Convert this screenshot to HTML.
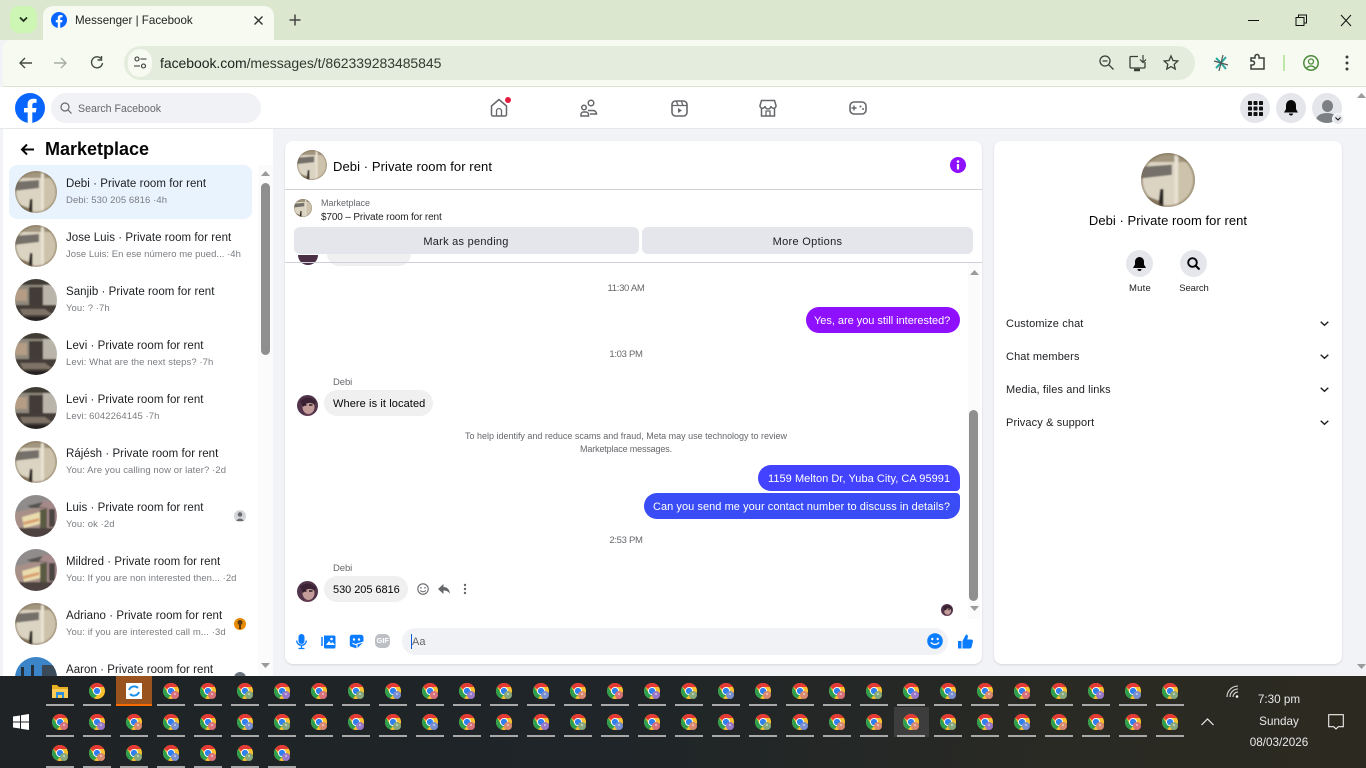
<!DOCTYPE html>
<html lang="en">
<head>
<meta charset="utf-8">
<title>Messenger | Facebook</title>
<style>
*{box-sizing:border-box;margin:0;padding:0}
html,body{width:1366px;height:768px;overflow:hidden;background:#f2f3f7;font-family:"Liberation Sans",sans-serif;color:#1c1e21}
.a{position:absolute}
.t{position:absolute;white-space:nowrap;line-height:16px;font-size:11px;margin-top:1px}
.z{margin-top:0}
.c{transform:translateX(-50%)}
.n{font-size:11.5px;color:#1c1e21;letter-spacing:.05px}
.s{font-size:9.5px;color:#7a7d82;letter-spacing:.08px}
.m{font-size:11px;letter-spacing:.05px}
.k{font-size:9.5px;color:#65676b;letter-spacing:-.3px}
svg{position:absolute;overflow:visible}
.w{background:#fff}
</style>
</head>
<body>
<svg width="0" height="0" style="position:absolute">
<defs>
<clipPath id="cp"><circle cx="21" cy="21" r="21"/></clipPath>
<filter id="bl" x="-10%" y="-10%" width="120%" height="120%"><feGaussianBlur stdDeviation=".7"/></filter>
<symbol id="r1" viewBox="0 0 42 42"><g clip-path="url(#cp)"><g filter="url(#bl)"><rect x="-2" y="-2" width="46" height="46" fill="#cbbfa8"/><rect x="-2" y="-2" width="46" height="9" fill="#a3967f"/><path d="M-2 7H26V44H-2z" fill="#dcd4c2"/><path d="M-2 11L24 9V17L-2 20z" fill="#74716a"/><path d="M26 0H29V44H26z" fill="#e8e1d2"/><path d="M29 7H44V44H29z" fill="#cdc2ab"/><path d="M13 44L15 28H17.500L17.500 44z" fill="#2c2620"/><path d="M-2 31L14 37V44H-2z" fill="#8a7a62"/><path d="M3 35L13 41V44H3z" fill="#2a231c"/><circle cx="21" cy="21" r="21" fill="none" stroke="#7b6a50" stroke-width="3" opacity=".5"/></g></g></symbol>
<symbol id="r2" viewBox="0 0 42 42"><g clip-path="url(#cp)"><g filter="url(#bl)"><rect x="-2" y="-2" width="46" height="46" fill="#8f897d"/><rect x="-2" y="-2" width="46" height="8" fill="#3f3a36"/><rect x="0" y="10" width="12" height="12" fill="#b49c85"/><rect x="14" y="8" width="14" height="18" fill="#423b37"/><rect x="28" y="6" width="16" height="24" fill="#bab5aa"/><path d="M-2 26H44V44H-2z" fill="#443d38"/><path d="M5 30H30L38 36H8z" fill="#7e7266"/><path d="M-2 38H44V44H-2z" fill="#262220"/></g></g></symbol>
<symbol id="r3" viewBox="0 0 42 42"><g clip-path="url(#cp)"><g filter="url(#bl)"><rect x="-2" y="-2" width="46" height="46" fill="#8f8c8b"/><path d="M-2 18L26 11V44H-2z" fill="#a89089"/><path d="M26 6H44V44H26z" fill="#a68a8a"/><path d="M7 22L25 17V29L9 33z" fill="#e9dcae"/><path d="M8 27L24 23V26L9 30z" fill="#d8a06f"/><path d="M25 15L32 13V34H25z" fill="#5a5a42"/><path d="M34 14H40V32H34z" fill="#4a4440"/><path d="M12 11L28 7L24 12L34 13H16z" fill="#55524f"/><path d="M-2 33H44V44H-2z" fill="#4d4240"/></g></g></symbol>
<symbol id="r4" viewBox="0 0 42 42"><g clip-path="url(#cp)"><rect width="42" height="42" fill="#3b84c8"/><rect x="6" y="10" width="3" height="32" fill="#24303a"/><rect x="16" y="8" width="3" height="34" fill="#24303a"/><rect x="27" y="8" width="15" height="34" fill="#3a4a58"/></g></symbol>
<symbol id="pp" viewBox="0 0 42 42"><g clip-path="url(#cp)"><g filter="url(#bl)"><rect x="-2" y="-2" width="46" height="46" fill="#53344c"/><ellipse cx="23" cy="24" rx="12" ry="14" fill="#c39b98"/><path d="M6 12Q20-2 38 12L36 20Q22 10 12 24z" fill="#3a2434"/><path d="M12 20h7M24 20h7" stroke="#2a1a22" stroke-width="3"/><path d="M6 44Q20 32 36 44z" fill="#6a3f57"/></g></g></symbol>
<symbol id="c" viewBox="0 0 16 16"><circle cx="8" cy="8" r="8" fill="#fbc02d"/><path d="M1.200 3.800A8 8 0 0 1 15 4H8L4.600 6.500z" fill="#e53935"/><path d="M1.200 3.800L4.600 10L8 12L5 15.400A8 8 0 0 1 1.200 3.800z" fill="#2e9e4f"/><circle cx="8" cy="8" r="4" fill="#fff"/><circle cx="8" cy="8" r="3.100" fill="#2f7fee"/><circle cx="12" cy="12" r="4" fill="currentColor"/><circle cx="12" cy="11" r="1.100" fill="#fff" opacity=".45"/></symbol>
<symbol id="c0" viewBox="0 0 16 16"><circle cx="8" cy="8" r="8" fill="#fbc02d"/><path d="M1.200 3.800A8 8 0 0 1 15 4H8L4.600 6.500z" fill="#e53935"/><path d="M1.200 3.800L4.600 10L8 12L5 15.400A8 8 0 0 1 1.200 3.800z" fill="#2e9e4f"/><circle cx="8" cy="8" r="4" fill="#fff"/><circle cx="8" cy="8" r="3.100" fill="#2f7fee"/></symbol>
</defs>
</svg>

<!-- Browser chrome -->
<div class="a" style="left:0;top:0;width:1366px;height:40px;background:#dbe8cf"></div>
<div class="a" style="left:10px;top:6px;width:27px;height:27px;border-radius:9px;background:#cdf5b4"></div>
<svg style="left:10px;top:6px" width="27" height="27"><path d="M10 11.500l3.500 3.500 3.500-3.500" fill="none" stroke="#20301c" stroke-width="1.800"/></svg>
<div class="a" style="left:43px;top:6px;width:231px;height:36px;background:#f6faf0;border-radius:10px 10px 0 0"></div>
<svg style="left:51px;top:12px" width="16" height="16" viewBox="0 0 30 30"><circle cx="15" cy="15" r="15" fill="#0866ff"/><path d="M20.800 19.400l.7-4.400h-4.200v-2.800c0-1.300.6-2.400 2.400-2.400h1.900V6s-1.700-.3-3.400-.3c-3.400 0-5.600 2-5.600 5.700V15H9v4.400h3.700V30h4.600V19.400z" fill="#fff"/></svg>
<div class="t" style="left:75px;top:12px;font-size:11.600px;color:#20241e">Messenger | Facebook</div>
<svg style="left:253px;top:15px" width="11" height="11"><path d="M1.500 1.500l8 8M9.500 1.500l-8 8" stroke="#333" stroke-width="1.400"/></svg>
<svg style="left:289px;top:14px" width="12" height="12"><path d="M6 .5v11M.5 6h11" stroke="#444" stroke-width="1.500"/></svg>
<svg style="left:1248px;top:14px" width="110" height="14"><path d="M0 6.500h11" stroke="#111" stroke-width="1"/><path d="M48 3.500h8v8h-8zM50.500 3.500V1h8v8h-2.500" fill="none" stroke="#111"/><path d="M93 1l10 11M103 1L93 12" stroke="#111"/></svg>

<div class="a" style="left:3px;top:40px;width:1363px;height:47px;background:#f6faf0;border-bottom:1px solid #dbe6d2;border-radius:8px 0 0 0"></div>
<svg style="left:18px;top:55px" width="96" height="16"><path d="M14 8H2M7 3L2 8 7 13" fill="none" stroke="#444b40" stroke-width="1.400"/><path d="M36 8h12M43 3l5 5-5 5" fill="none" stroke="#a8aea4" stroke-width="1.400"/><path d="M83 3.500a5.500 5.500 0 1 0 1.500 4.500M83.500 1v4h-4" fill="none" stroke="#444b40" stroke-width="1.400"/></svg>
<div class="a" style="left:124px;top:46px;width:1071px;height:34px;border-radius:17px;background:#e4ecdd"></div>
<div class="a" style="left:128px;top:49px;width:24px;height:28px;border-radius:14px;background:#f6faf0"></div>
<svg style="left:134px;top:56px" width="13" height="14"><circle cx="3" cy="3" r="2" fill="none" stroke="#333" stroke-width="1.100"/><path d="M6.500 3h6M0 10h6" stroke="#333" stroke-width="1.100"/><circle cx="9.500" cy="10" r="2" fill="none" stroke="#333" stroke-width="1.100"/></svg>
<div class="t z" style="left:160px;top:55px;font-size:14px;color:#333a30;letter-spacing:-.05px"><span style="color:#20241e">facebook.com</span>/messages/t/862339283485845</div>
<svg style="left:1098px;top:54px" width="84" height="18"><circle cx="7" cy="7" r="5" fill="none" stroke="#3a3f37" stroke-width="1.300"/><path d="M4.500 7h5M11 11l4.500 4.500" stroke="#3a3f37" stroke-width="1.300"/><path d="M40 2.500h-7a1 1 0 0 0-1 1V13a1 1 0 0 0 1 1h13a1 1 0 0 0 1-1V8" fill="none" stroke="#3a3f37" stroke-width="1.300"/><path d="M36 16h6" stroke="#3a3f37" stroke-width="2.500"/><path d="M45 1v7M42 5.500l3 3 3-3" fill="none" stroke="#3a3f37" stroke-width="1.200"/><path d="M73 2l2 4.500 4.800.5-3.600 3.300 1 4.800L73 12.600l-4.200 2.500 1-4.800L66.200 7l4.800-.5z" fill="none" stroke="#3a3f37" stroke-width="1.300"/></svg>
<svg style="left:1213px;top:54px" width="16" height="18"><path d="M3 4l5 5-5 5M13 3L8 9l5 6" fill="none" stroke="#2aa8a0" stroke-width="2"/><path d="M1 7l14 4M10 1L6 17" stroke="#555" stroke-width="1.200"/></svg>
<svg style="left:1249px;top:53px" width="18" height="18"><path d="M2 4h4V2.500a2 2 0 0 1 4 0V4h5v11H2v-4h1.500a2 2 0 0 0 0-4H2z" fill="none" stroke="#3a3f37" stroke-width="1.500" transform="translate(0 1)"/></svg>
<div class="a" style="left:1283px;top:55px;width:2px;height:16px;background:#bfe6a9"></div>
<svg style="left:1303px;top:55px" width="16" height="16"><circle cx="8" cy="8" r="7.200" fill="none" stroke="#4c8a3c" stroke-width="1.500"/><circle cx="8" cy="6.500" r="2.500" fill="none" stroke="#4c8a3c" stroke-width="1.300"/><path d="M3.500 13q4.500-4 9 0" fill="none" stroke="#4c8a3c" stroke-width="1.300"/></svg>
<svg style="left:1345px;top:55px" width="4" height="16"><circle cx="2" cy="2" r="1.500" fill="#3a3f37"/><circle cx="2" cy="8" r="1.500" fill="#3a3f37"/><circle cx="2" cy="14" r="1.500" fill="#3a3f37"/></svg>

<!-- Facebook top nav -->
<div class="a w" style="left:0;top:87px;width:1366px;height:42px;border-bottom:1px solid #e6e7ea"></div>
<svg style="left:15px;top:93px" width="30" height="30" viewBox="0 0 30 30"><circle cx="15" cy="15" r="15" fill="#0866ff"/><path d="M20.800 19.400l.7-4.400h-4.200v-2.800c0-1.300.6-2.400 2.400-2.400h1.900V6s-1.700-.3-3.400-.3c-3.400 0-5.600 2-5.600 5.700V15H9v4.400h3.700V30h4.600V19.400z" fill="#fff"/></svg>
<div class="a" style="left:51px;top:93px;width:210px;height:30px;border-radius:15px;background:#f0f2f5"></div>
<svg style="left:60px;top:102px" width="12" height="12"><circle cx="5" cy="5" r="4" fill="none" stroke="#65676b" stroke-width="1.200"/><path d="M8 8l3.500 3.500" stroke="#65676b" stroke-width="1.200"/></svg>
<div class="t" style="left:78px;top:100px;font-size:10.600px;color:#65676b">Search Facebook</div>

<svg style="left:490px;top:97px" width="24" height="21"><path d="M1.500 9L9 2.500 16.500 9v8.500a1.500 1.500 0 0 1-1.500 1.500H3a1.500 1.500 0 0 1-1.500-1.500z" fill="none" stroke="#65676b" stroke-width="1.500"/><path d="M6.500 19v-5a2.500 2.500 0 0 1 5 0v5" fill="none" stroke="#65676b" stroke-width="1.300"/><circle cx="18" cy="3" r="3" fill="#e41e3f"/></svg>
<svg style="left:580px;top:99px" width="18" height="18"><circle cx="11" cy="4" r="2.800" fill="none" stroke="#65676b" stroke-width="1.500"/><circle cx="4" cy="8.500" r="2.300" fill="none" stroke="#65676b" stroke-width="1.500"/><path d="M8 11.500h5a3.500 3.500 0 0 1 3.500 3.500H10" fill="none" stroke="#65676b" stroke-width="1.500"/><path d="M1 17v-1.500a2.500 2.500 0 0 1 2.500-2.500H6a2.500 2.500 0 0 1 2.500 2.500V17z" fill="none" stroke="#65676b" stroke-width="1.500"/></svg>
<svg style="left:671px;top:100px" width="17" height="17"><rect x="1" y="1" width="15" height="15" rx="3.500" fill="none" stroke="#65676b" stroke-width="1.600"/><path d="M1 5.500h15M5.500 1.500l1.500 4M10.500 1.500l1.500 4" stroke="#65676b" stroke-width="1.300"/><path d="M7 8v5l4-2.500z" fill="#65676b"/></svg>
<svg style="left:759px;top:99px" width="18" height="18"><path d="M2.500 1.500h13l1.500 5a2.500 2.500 0 0 1-5 .5 2.800 2.800 0 0 1-6 0 2.500 2.500 0 0 1-5-.5z" fill="none" stroke="#65676b" stroke-width="1.500"/><path d="M2.500 9v8h13V9" fill="none" stroke="#65676b" stroke-width="1.500"/><path d="M7 17v-5h4v5" fill="none" stroke="#65676b" stroke-width="1.300"/></svg>
<svg style="left:849px;top:101px" width="18" height="14"><rect x="1" y="1" width="16" height="12" rx="4" fill="none" stroke="#65676b" stroke-width="1.600"/><path d="M5 4.500v5M2.500 7h5" stroke="#65676b" stroke-width="1.400"/><circle cx="11.500" cy="5.500" r="1" fill="#65676b"/><circle cx="14" cy="8" r="1" fill="#65676b"/></svg>

<div class="a" style="left:1240px;top:93px;width:30px;height:30px;border-radius:50%;background:#e4e6eb"></div>
<svg style="left:1248px;top:101px" width="15" height="15"><g fill="#111"><rect width="4" height="4" rx=".8"/><rect x="5.500" width="4" height="4" rx=".8"/><rect x="11" width="4" height="4" rx=".8"/><rect y="5.500" width="4" height="4" rx=".8"/><rect x="5.500" y="5.500" width="4" height="4" rx=".8"/><rect x="11" y="5.500" width="4" height="4" rx=".8"/><rect y="11" width="4" height="4" rx=".8"/><rect x="5.500" y="11" width="4" height="4" rx=".8"/><rect x="11" y="11" width="4" height="4" rx=".8"/></g></svg>
<div class="a" style="left:1276px;top:93px;width:30px;height:30px;border-radius:50%;background:#e4e6eb"></div>
<svg style="left:1284px;top:100px" width="14" height="16"><path d="M7 0a5 5 0 0 1 5 5v4l2 3.500H0L2 9V5a5 5 0 0 1 5-5z" fill="#080809"/><path d="M5 13.500a2 2 0 0 0 4 0z" fill="#080809"/></svg>
<div class="a" style="left:1312px;top:93px;width:30px;height:30px;border-radius:50%;background:#e4e6eb;overflow:hidden"><div class="a" style="left:10px;top:7px;width:11px;height:12px;border-radius:50%;background:#7c7f84"></div><div class="a" style="left:4px;top:20px;width:22px;height:14px;border-radius:50%;background:#7c7f84"></div></div>
<div class="a" style="left:1332px;top:113px;width:12px;height:12px;border-radius:50%;background:#e4e6eb;border:1px solid #fff"></div>
<svg style="left:1335px;top:117px" width="6" height="4"><path d="M.5.500L3 3 5.500.500" fill="none" stroke="#111" stroke-width="1.100"/></svg>
<svg style="left:1356px;top:92px" width="10" height="6"><path d="M1 6l4.500-5L10 6z" fill="#9a9a9a"/></svg>
<svg style="left:1356px;top:664px" width="10" height="6"><path d="M1 0l4.500 5L10 0z" fill="#9a9a9a"/></svg>

<!-- Left list -->
<div class="a w" style="left:3px;top:129px;width:270px;height:547px"></div>
<svg style="left:20px;top:143px" width="15" height="13"><path d="M14 6.500H2M7 1.500L2 6.500 7 11.500" fill="none" stroke="#050505" stroke-width="2"/></svg>
<div class="t z" style="left:45px;top:139px;font-size:18px;line-height:20px;font-weight:bold;color:#050505">Marketplace</div>
<div class="a" style="left:9px;top:165px;width:243px;height:54px;border-radius:8px;background:#e8f3fe"></div>
<svg style="left:15px;top:171px" width="42" height="42"><use href="#r1"/></svg>
<div class="t n" style="left:66px;top:175px">Debi · Private room for rent</div><div class="t s" style="left:66px;top:192px">Debi: 530 205 6816 ·4h</div>
<svg style="left:15px;top:225px" width="42" height="42"><use href="#r1"/></svg>
<div class="t n" style="left:66px;top:229px">Jose Luis · Private room for rent</div><div class="t s" style="left:66px;top:246px;letter-spacing:.03px">Jose Luis: En ese número me pued... ·4h</div>
<svg style="left:15px;top:279px" width="42" height="42"><use href="#r2"/></svg>
<div class="t n" style="left:66px;top:283px">Sanjib · Private room for rent</div><div class="t s" style="left:66px;top:300px">You: ? ·7h</div>
<svg style="left:15px;top:333px" width="42" height="42"><use href="#r2"/></svg>
<div class="t n" style="left:66px;top:337px">Levi · Private room for rent</div><div class="t s" style="left:66px;top:354px">Levi: What are the next steps? ·7h</div>
<svg style="left:15px;top:387px" width="42" height="42"><use href="#r2"/></svg>
<div class="t n" style="left:66px;top:391px">Levi · Private room for rent</div><div class="t s" style="left:66px;top:408px">Levi: 6042264145 ·7h</div>
<svg style="left:15px;top:441px" width="42" height="42"><use href="#r1"/></svg>
<div class="t n" style="left:66px;top:445px">Rájésh · Private room for rent</div><div class="t s" style="left:66px;top:462px">You: Are you calling now or later? ·2d</div>
<svg style="left:15px;top:495px" width="42" height="42"><use href="#r3"/></svg>
<div class="t n" style="left:66px;top:499px">Luis · Private room for rent</div><div class="t s" style="left:66px;top:516px">You: ok ·2d</div>
<svg style="left:234px;top:510px" width="12" height="12"><circle cx="6" cy="6" r="6" fill="#d3d5d8"/><circle cx="6" cy="4.500" r="2.300" fill="#6a6c70"/><path d="M2 11q4-5 8 0z" fill="#6a6c70"/></svg>
<svg style="left:15px;top:549px" width="42" height="42"><use href="#r3"/></svg>
<div class="t n" style="left:66px;top:553px">Mildred · Private room for rent</div><div class="t s" style="left:66px;top:570px;letter-spacing:.03px">You: If you are non interested then... ·2d</div>
<svg style="left:15px;top:603px" width="42" height="42"><use href="#r1"/></svg>
<div class="t n" style="left:66px;top:607px">Adriano · Private room for rent</div><div class="t s" style="left:66px;top:624px">You: if you are interested call m... ·3d</div>
<svg style="left:234px;top:618px" width="12" height="12"><circle cx="6" cy="6" r="6" fill="#e98b00"/><circle cx="6" cy="4.500" r="2.500" fill="#5a3c10"/><path d="M5 6h2v5H5z" fill="#5a3c10"/></svg>
<svg style="left:15px;top:657px" width="42" height="42"><use href="#r4"/></svg>
<div class="t n" style="left:66px;top:661px">Aaron · Private room for rent</div>
<svg style="left:234px;top:672px" width="12" height="12"><circle cx="6" cy="6" r="6" fill="#6c7480"/></svg>
<div class="a" style="left:258px;top:165px;width:15px;height:511px;background:#fbfbfb"></div>
<svg style="left:260px;top:170px" width="11" height="6"><path d="M1 6l4.500-5L10 6z" fill="#9a9a9a"/></svg>
<div class="a" style="left:261px;top:183px;width:9px;height:172px;border-radius:5px;background:#8f8f8f"></div>
<svg style="left:260px;top:663px" width="11" height="6"><path d="M1 0l4.500 5L10 0z" fill="#9a9a9a"/></svg>

<!-- Center panel -->
<div class="a w" style="left:285px;top:141px;width:697px;height:523px;border-radius:8px;box-shadow:0 1px 2px rgba(0,0,0,.12)"></div>
<svg style="left:297px;top:150px" width="30" height="30" viewBox="0 0 42 42"><use href="#r1" width="42" height="42"/></svg>
<div class="t" style="left:333px;top:158px;font-size:13px;color:#050505;letter-spacing:.08px">Debi · Private room for rent</div>
<svg style="left:950px;top:157px" width="16" height="16"><circle cx="8" cy="8" r="8" fill="#8f0fff"/><circle cx="8" cy="4.500" r="1.300" fill="#fff"/><rect x="6.900" y="7" width="2.200" height="5.500" rx=".5" fill="#fff"/></svg>
<div class="a" style="left:285px;top:189px;width:697px;height:1px;background:#cfd1d4"></div>
<svg style="left:294px;top:199px" width="18" height="18" viewBox="0 0 42 42"><use href="#r1" width="42" height="42"/></svg>
<div class="t z" style="left:321px;top:195px;font-size:9px;color:#65676b">Marketplace</div>
<div class="t" style="left:321px;top:209px;font-size:10px;color:#1c1e21;letter-spacing:-.14px">$700 – Private room for rent</div>
<div class="a" style="left:294px;top:227px;width:345px;height:27px;border-radius:6px;background:#e4e6eb"></div>
<div class="t c" style="left:466px;top:233px;font-size:11px;color:#1c1e21;letter-spacing:.27px">Mark as pending</div>
<div class="a" style="left:642px;top:227px;width:331px;height:27px;border-radius:6px;background:#e4e6eb"></div>
<div class="t c" style="left:807.500px;top:233px;font-size:11px;color:#1c1e21;letter-spacing:.3px">More Options</div>
<svg style="left:298px;top:256px" width="20" height="10" viewBox="0 0 20 10"><path d="M0 0H20A10 10 0 0 1 0 0z" fill="#4b2f45" transform="translate(0 -1)"/></svg>
<div class="a" style="left:327px;top:254px;width:84px;height:12px;border-radius:0 0 13px 13px;background:#f0f0f0"></div>
<div class="a" style="left:285px;top:262px;width:697px;height:1px;background:#d0d0d8"></div>

<div class="a" style="left:968px;top:263px;width:12px;height:356px;background:#fbfbfb"></div>
<svg style="left:969px;top:269px" width="11" height="6"><path d="M1 6l4.500-5L10 6z" fill="#9a9a9a"/></svg>
<div class="a" style="left:969px;top:410px;width:9px;height:191px;border-radius:5px;background:#8f8f8f"></div>
<svg style="left:969px;top:606px" width="11" height="6"><path d="M1 0l4.500 5L10 0z" fill="#9a9a9a"/></svg>

<div class="t c k" style="left:626px;top:280px">11:30 AM</div>
<div class="a" style="left:806px;top:307px;width:154px;height:26px;border-radius:13px;background:#8f0fff"></div>
<div class="t m" style="left:814px;top:312px;color:#fff;letter-spacing:-.03px">Yes, are you still interested?</div>
<div class="t c k" style="left:626px;top:346px">1:03 PM</div>
<div class="t" style="left:333px;top:374px;font-size:9.500px;color:#65676b;letter-spacing:-.1px">Debi</div>
<div class="a" style="left:324px;top:390px;width:109px;height:26px;border-radius:13px;background:#f0f0f0"></div>
<div class="t m" style="left:333px;top:395px;color:#050505;letter-spacing:.1px">Where is it located</div>
<svg style="left:297px;top:395px" width="21" height="21" viewBox="0 0 42 42"><use href="#pp" width="42" height="42"/></svg>
<div class="t c z" style="left:626px;top:428px;font-size:9px;color:#65676b;letter-spacing:-.01px">To help identify and reduce scams and fraud, Meta may use technology to review</div>
<div class="t c" style="left:626px;top:440px;font-size:9px;color:#65676b;letter-spacing:-.15px">Marketplace messages.</div>
<div class="a" style="left:758px;top:465px;width:202px;height:26px;border-radius:13px 13px 4px 13px;background:#4343ff"></div>
<div class="t m" style="left:768px;top:470px;color:#fff">1159 Melton Dr, Yuba City, CA 95991</div>
<div class="a" style="left:644px;top:493px;width:316px;height:26px;border-radius:13px 4px 13px 13px;background:#3a4cf5"></div>
<div class="t m" style="left:653px;top:498px;color:#fff">Can you send me your contact number to discuss in details?</div>
<div class="t c k" style="left:626px;top:532px">2:53 PM</div>
<div class="t" style="left:333px;top:560px;font-size:9.500px;color:#65676b;letter-spacing:-.1px">Debi</div>
<div class="a" style="left:324px;top:576px;width:84px;height:26px;border-radius:13px;background:#f0f0f0"></div>
<div class="t m" style="left:333px;top:581px;color:#050505;letter-spacing:-.05px">530 205 6816</div>
<svg style="left:297px;top:581px" width="21" height="21" viewBox="0 0 42 42"><use href="#pp" width="42" height="42"/></svg>
<svg style="left:417px;top:583px" width="52" height="12"><circle cx="6" cy="6" r="5.200" fill="none" stroke="#65676b" stroke-width="1.100"/><circle cx="4" cy="4.800" r=".8" fill="#65676b"/><circle cx="8" cy="4.800" r=".8" fill="#65676b"/><path d="M3.200 7.500q2.800 2.500 5.600 0" fill="none" stroke="#65676b"/><path d="M21 6l5.500-5v3c4 0 6 2.500 6.500 7-1.500-2.500-3.500-3.500-6.500-3.500V11z" fill="#65676b"/><circle cx="48" cy="2" r="1.200" fill="#65676b"/><circle cx="48" cy="6" r="1.200" fill="#65676b"/><circle cx="48" cy="10" r="1.200" fill="#65676b"/></svg>
<svg style="left:941px;top:604px" width="12" height="12" viewBox="0 0 42 42"><use href="#pp" width="42" height="42"/></svg>

<svg style="left:296px;top:634px" width="11" height="15"><rect x="2.500" y="0" width="6" height="10" rx="3" fill="#0a7cff"/><path d="M.7 6.500a4.800 4.800 0 0 0 9.600 0M5.500 11.500V14M2.500 14.500h6" fill="none" stroke="#0a7cff" stroke-width="1.300"/></svg>
<svg style="left:321px;top:634px" width="15" height="15"><path d="M3 1.500h10a1.500 1.500 0 0 1 1.500 1.500v10a1.500 1.500 0 0 1-1.500 1.500H4.500a1.500 1.500 0 0 1-1.500-1.500z" fill="#0a7cff"/><path d="M1 3v9" stroke="#0a7cff" stroke-width="1.500"/><path d="M5 11l3-4 2 2.500 1.500-1.500L14 11z" fill="#fff"/><circle cx="10.500" cy="5" r="1.300" fill="#fff"/></svg>
<svg style="left:349px;top:634px" width="15" height="15"><path d="M3 .8h9A2.500 2.500 0 0 1 14.500 3.500V8L8 14.500 3 13A2.500 2.500 0 0 1 .8 10.500V3A2.200 2.200 0 0 1 3 .8z" fill="#0a7cff"/><circle cx="5" cy="5.500" r="1.200" fill="#fff"/><circle cx="10" cy="5.500" r="1.200" fill="#fff"/><path d="M3.500 9q2.500 2.500 5 1" fill="none" stroke="#fff" stroke-width="1.100"/><path d="M8 14.500V10l6.500-2" fill="none" stroke="#fff" stroke-width="1.100"/></svg>
<div class="a" style="left:375px;top:634px;width:15px;height:14px;border-radius:5px;background:#bcc0c4"></div>
<div class="t z" style="left:376.500px;top:633px;font-size:7.500px;font-weight:bold;color:#fff">GIF</div>
<div class="a" style="left:402px;top:628px;width:546px;height:27px;border-radius:14px;background:#f0f2f5"></div>
<div class="a" style="left:411px;top:634px;width:1px;height:15px;background:#0a5cd8"></div>
<div class="t z" style="left:412px;top:634px;font-size:11px;color:#65676b">Aa</div>
<svg style="left:927px;top:633px" width="16" height="16"><circle cx="8" cy="8" r="7.800" fill="#0a7cff"/><circle cx="5.300" cy="6" r="1.200" fill="#fff"/><circle cx="10.700" cy="6" r="1.200" fill="#fff"/><path d="M3.800 9.500q4.200 3.800 8.400 0" fill="none" stroke="#fff" stroke-width="1.200"/></svg>
<svg style="left:958px;top:634px" width="15" height="15"><path d="M0 7h3.500v7.500H0z" fill="#0a7cff"/><path d="M4.500 7L8 .5c1.500 0 2.200 1.200 1.800 2.800L9.300 5.500h4c1.200 0 1.900 1 1.600 2l-1.300 5.500c-.3 1-1 1.500-2 1.500H4.500z" fill="#0a7cff"/></svg>

<!-- Right panel -->
<div class="a w" style="left:994px;top:141px;width:348px;height:523px;border-radius:8px;box-shadow:0 1px 2px rgba(0,0,0,.12)"></div>
<svg style="left:1141px;top:153px" width="54" height="54" viewBox="0 0 42 42"><use href="#r1" width="42" height="42"/></svg>
<div class="t c" style="left:1168px;top:212px;font-size:13px;color:#050505;letter-spacing:.05px">Debi · Private room for rent</div>
<div class="a" style="left:1126px;top:250px;width:27px;height:27px;border-radius:50%;background:#e4e6eb"></div>
<svg style="left:1133px;top:257px" width="13" height="14"><path d="M6.500 0a4.500 4.500 0 0 1 4.500 4.500v3L13 11H0l2-3.500v-3A4.500 4.500 0 0 1 6.500 0z" fill="#050505"/><path d="M4.500 12a2 2 0 0 0 4 0z" fill="#050505"/></svg>
<div class="a" style="left:1180px;top:250px;width:27px;height:27px;border-radius:50%;background:#e4e6eb"></div>
<svg style="left:1187px;top:257px" width="13" height="13"><circle cx="5.500" cy="5.500" r="4.300" fill="none" stroke="#050505" stroke-width="1.900"/><path d="M8.500 8.500l4 4" stroke="#050505" stroke-width="2"/></svg>
<div class="t c" style="left:1140px;top:279.500px;font-size:9.500px;color:#1c1e21;letter-spacing:.25px">Mute</div>
<div class="t c" style="left:1194px;top:279.500px;font-size:9.500px;color:#1c1e21;letter-spacing:-.1px">Search</div>
<div class="t n" style="left:1006px;top:315px;font-size:11px;letter-spacing:.12px">Customize chat</div>
<div class="t n" style="left:1006px;top:348px;font-size:11px;letter-spacing:.12px">Chat members</div>
<div class="t n" style="left:1006px;top:381px;font-size:11px;letter-spacing:.12px">Media, files and links</div>
<div class="t n" style="left:1006px;top:414px;font-size:11px;letter-spacing:.12px">Privacy &amp; support</div>
<svg style="left:1320px;top:321px" width="9" height="105"><g fill="none" stroke="#1c1e21" stroke-width="1.400"><path d="M.7.700L4.500 4.300 8.300.7"/><path d="M.7 33.700L4.500 37.300 8.300 33.700"/><path d="M.7 66.700L4.500 70.300 8.300 66.700"/><path d="M.7 99.700L4.500 103.300 8.300 99.700"/></g></svg>

<!-- Taskbar -->
<div class="a" style="left:0;top:676px;width:1366px;height:92px;background:linear-gradient(90deg,#1f2326 0,#1f2528 45%,#2a2a24 80%,#2c2a20 100%)"></div>
<div class="a" style="left:116px;top:676px;width:36px;height:30px;background:#99531f"></div>
<div class="a" style="left:894px;top:707px;width:35px;height:30px;background:rgba(255,255,255,.1)"></div>
<svg style="left:13px;top:714px" width="16" height="16"><path d="M0 2.500L7 1.500V7.500H0zM8 1.300L16 0V7.500H8zM0 8.500H7V14.500L0 13.500zM8 8.500H16V16L8 14.700z" fill="#fff"/></svg>
<svg style="left:0;top:0" width="1366" height="768">
<g fill="none" stroke="#a9a9a9" stroke-width="2" stroke-dasharray="28 9"><path d="M46 705H1184"/><path d="M46 736H1184"/><path d="M46 767H296"/></g>
<rect x="116" y="704" width="36" height="2" fill="#f76a00"/>
<path d="M52 685h5l2 2h9v11H52z" fill="#e8b020"/><path d="M52 689h16v9H52z" fill="#f8cc55"/><path d="M56 692h8v6h-2v-3h-4v3h-2z" fill="#2f8fdc"/>
<use href="#c0" x="89" y="683" width="16" height="16"/>
<rect x="126" y="683" width="16" height="16" fill="#fff"/><path d="M138 688a5.500 5.500 0 0 0-9 2M130 694a5.500 5.500 0 0 0 9-2" fill="none" stroke="#1e90e8" stroke-width="2"/>
<g color="#d8707a">
<use href="#c" x="163" y="683" width="16" height="16"/><use href="#c" x="200" y="683" width="16" height="16"/><use href="#c" x="311" y="683" width="16" height="16"/><use href="#c" x="422" y="683" width="16" height="16"/><use href="#c" x="607" y="683" width="16" height="16"/><use href="#c" x="829" y="683" width="16" height="16"/><use href="#c" x="1014" y="683" width="16" height="16"/>
<use href="#c" x="52" y="714" width="16" height="16"/><use href="#c" x="200" y="714" width="16" height="16"/><use href="#c" x="459" y="714" width="16" height="16"/><use href="#c" x="644" y="714" width="16" height="16"/><use href="#c" x="1125" y="714" width="16" height="16"/>
<use href="#c" x="200" y="745" width="16" height="16"/></g>
<g color="#87a87c">
<use href="#c" x="237" y="683" width="16" height="16"/><use href="#c" x="348" y="683" width="16" height="16"/><use href="#c" x="496" y="683" width="16" height="16"/><use href="#c" x="681" y="683" width="16" height="16"/><use href="#c" x="866" y="683" width="16" height="16"/><use href="#c" x="1051" y="683" width="16" height="16"/><use href="#c" x="1162" y="683" width="16" height="16"/>
<use href="#c" x="274" y="714" width="16" height="16"/><use href="#c" x="385" y="714" width="16" height="16"/><use href="#c" x="570" y="714" width="16" height="16"/><use href="#c" x="755" y="714" width="16" height="16"/><use href="#c" x="940" y="714" width="16" height="16"/><use href="#c" x="1162" y="714" width="16" height="16"/>
<use href="#c" x="52" y="745" width="16" height="16"/><use href="#c" x="126" y="745" width="16" height="16"/><use href="#c" x="237" y="745" width="16" height="16"/></g>
<g color="#9a78c8">
<use href="#c" x="274" y="683" width="16" height="16"/><use href="#c" x="459" y="683" width="16" height="16"/><use href="#c" x="644" y="683" width="16" height="16"/><use href="#c" x="903" y="683" width="16" height="16"/><use href="#c" x="1088" y="683" width="16" height="16"/>
<use href="#c" x="89" y="714" width="16" height="16"/><use href="#c" x="348" y="714" width="16" height="16"/><use href="#c" x="533" y="714" width="16" height="16"/><use href="#c" x="718" y="714" width="16" height="16"/><use href="#c" x="977" y="714" width="16" height="16"/>
<use href="#c" x="274" y="745" width="16" height="16"/></g>
<g color="#7a8fd0">
<use href="#c" x="385" y="683" width="16" height="16"/><use href="#c" x="533" y="683" width="16" height="16"/><use href="#c" x="718" y="683" width="16" height="16"/><use href="#c" x="940" y="683" width="16" height="16"/><use href="#c" x="1125" y="683" width="16" height="16"/>
<use href="#c" x="163" y="714" width="16" height="16"/><use href="#c" x="237" y="714" width="16" height="16"/><use href="#c" x="422" y="714" width="16" height="16"/><use href="#c" x="607" y="714" width="16" height="16"/><use href="#c" x="792" y="714" width="16" height="16"/><use href="#c" x="1014" y="714" width="16" height="16"/>
<use href="#c" x="163" y="745" width="16" height="16"/></g>
<g color="#d9896f">
<use href="#c" x="570" y="683" width="16" height="16"/><use href="#c" x="755" y="683" width="16" height="16"/><use href="#c" x="792" y="683" width="16" height="16"/><use href="#c" x="977" y="683" width="16" height="16"/>
<use href="#c" x="126" y="714" width="16" height="16"/><use href="#c" x="311" y="714" width="16" height="16"/><use href="#c" x="496" y="714" width="16" height="16"/><use href="#c" x="681" y="714" width="16" height="16"/><use href="#c" x="829" y="714" width="16" height="16"/><use href="#c" x="866" y="714" width="16" height="16"/><use href="#c" x="903" y="714" width="16" height="16"/><use href="#c" x="1051" y="714" width="16" height="16"/><use href="#c" x="1088" y="714" width="16" height="16"/>
<use href="#c" x="89" y="745" width="16" height="16"/></g>
</svg>
<svg style="left:1226px;top:685px" width="14" height="14"><g fill="none" stroke="#ddd" stroke-width="1.100"><path d="M1 12A11 11 0 0 1 12 1"/><path d="M4 12A8 8 0 0 1 12 4"/><path d="M7 12A5 5 0 0 1 12 7"/></g><circle cx="11" cy="11.500" r="1.300" fill="#fff"/></svg>
<svg style="left:1201px;top:718px" width="13" height="8"><path d="M.5 7L6.500 1l6 6" fill="none" stroke="#eee" stroke-width="1.200"/></svg>
<div class="t c z" style="left:1279px;top:692px;font-size:11.700px;color:#e8e8e8">7:30 pm</div>
<div class="t c z" style="left:1279px;top:714px;font-size:11.700px;color:#e8e8e8">Sunday</div>
<div class="t c z" style="left:1279px;top:735px;font-size:11.700px;color:#e8e8e8">08/03/2026</div>
<svg style="left:1328px;top:714px" width="17" height="17"><path d="M.7.700h14.600v12h-5L8 15l-2.300-2.300h-5z" fill="none" stroke="#eee" stroke-width="1.100"/></svg>
</body>
</html>
